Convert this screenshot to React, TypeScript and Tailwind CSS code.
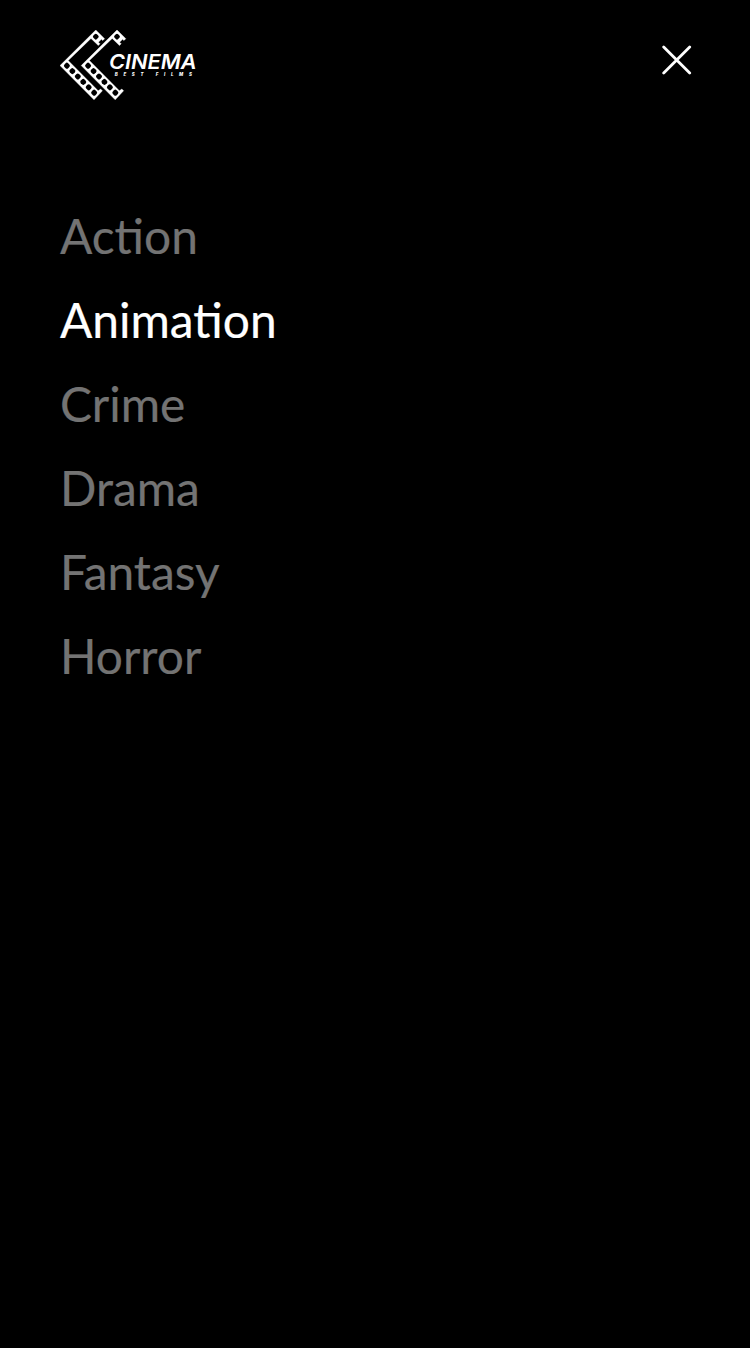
const genres = ['Action', 'Animation', 'Crime', 'Drama', 'Fantasy', 'Horror'];
const active = 'Animation';

const holes = [0, 1, 2, 3, 4, 5];

function FilmStrip({ x }: { x: number }) {
  return (
    <g transform={`translate(${x} 0)`}>
      <path
        d="M0 35.6 35.8 0 44.6 8.7 42.8 10.5 41.4 9.3 38.4 12.2 40 13.8 38.3 15.6 31 8.4 8.2 30.6 38.2 60.8 40.6 59 42.4 60.8 34 69.8Z"
        fill="white"
        stroke="white"
        strokeWidth="0.4"
      />
      <rect x="-2.5" y="-2.5" width="5" height="5" rx="1.6" transform="translate(35.8 6.7) rotate(45)" fill="black" />
      {holes.map((i) => (
        <rect
          key={i}
          x="-2.65"
          y="-2.6"
          width="5.3"
          height="5.2"
          rx="1.8"
          transform={`translate(${6.9 + i * 5.45} ${35.7 + i * 5.4}) rotate(45)`}
          fill="black"
        />
      ))}
    </g>
  );
}

function Logo() {
  return (
    <svg className="h-[70px] w-[138px]" viewBox="0 0 138 70" role="img" aria-label="Cinema best films">
      <FilmStrip x={0} />
      <FilmStrip x={21.2} />
      <g fill="white" fontFamily="Inter, 'Liberation Sans', sans-serif" fontStyle="italic">
        <text x="48.9" y="38.9" fontSize="20.3" fontWeight="600" textLength="87.6" lengthAdjust="spacingAndGlyphs">
          CINEMA
        </text>
        <text x="54.8" y="46.1" fontSize="4.4" fontWeight="800" textLength="77" lengthAdjust="spacing">
          BEST FILMS
        </text>
      </g>
    </svg>
  );
}

export default function App() {
  return (
    <div className="min-h-[1348px] w-full bg-black px-[60px] pt-[30px] font-[Lato,sans-serif]">
      <header className="flex items-start justify-between">
        <Logo />
        <button type="button" aria-label="Close" className="mt-[15px] -mr-[2px]">
          <svg className="h-[30px] w-[30px]" viewBox="0 0 30 30" fill="none" stroke="white" strokeWidth="2.8" strokeLinecap="round">
            <path d="M1.7 2.1 27.7 28.1M27.7 2.1 1.7 28.1" />
          </svg>
        </button>
      </header>
      <nav className="mt-[107px]">
        <ul className="flex flex-col gap-[26px]">
          {genres.map((genre) => (
            <li key={genre}>
              <a
                href="#"
                className={`block text-[47.85px] leading-[58px] [-webkit-text-stroke:0.2px] ${genre === active ? 'text-white' : 'text-[#737373]'}`}
              >
                {genre}
              </a>
            </li>
          ))}
        </ul>
      </nav>
    </div>
  );
}
